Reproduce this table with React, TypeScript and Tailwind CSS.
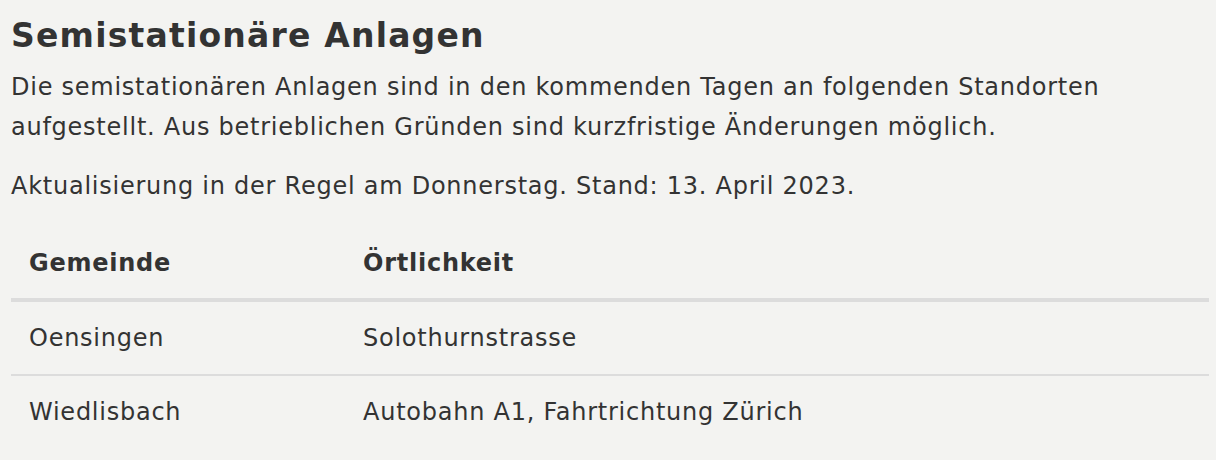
import React from "react";

const rows = [
  ["Oensingen", "Solothurnstrasse"],
  ["Wiedlisbach", "Autobahn A1, Fahrtrichtung Zürich"],
];

export default function App() {
  return (
    <div
      className="min-h-[460px] w-full bg-[#f3f3f1] pl-[11px] pr-[7px] pt-[13px] text-[#333333]"
      style={{ fontFamily: '"DejaVu Sans", "Noto Sans", sans-serif' }}
    >
      <h1 className="text-[33px] font-bold leading-[46px] tracking-[1.2px]">Semistationäre Anlagen</h1>
      <p className="mt-[8px] text-[24px] leading-[40px] tracking-[0.75px]">
        Die semistationären Anlagen sind in den kommenden Tagen an folgenden Standorten aufgestellt. Aus betrieblichen Gründen sind kurzfristige Änderungen möglich.
      </p>
      <p className="mt-[19px] text-[24px] leading-[40px] tracking-[0.75px]">
        Aktualisierung in der Regel am Donnerstag. Stand: 13. April 2023.
      </p>
      <table className="mt-[20px] w-full border-collapse text-[24px] leading-[40px] tracking-[0.75px]">
        <thead>
          <tr className="border-b-4 border-[#dcdcdc]">
            <th className="w-[352px] pt-[17px] pb-[15px] pl-[18px] text-left font-bold">Gemeinde</th>
            <th className="pt-[17px] pb-[15px] text-left font-bold">Örtlichkeit</th>
          </tr>
        </thead>
        <tbody>
          {rows.map((r, i) => (
            <tr key={i} className={i === 0 ? "border-b-2 border-[#dcdcdc]" : ""}>
              <td className="pt-[16px] pb-[16px] pl-[18px]">{r[0]}</td>
              <td className="pt-[16px] pb-[16px]">{r[1]}</td>
            </tr>
          ))}
        </tbody>
      </table>
    </div>
  );
}
